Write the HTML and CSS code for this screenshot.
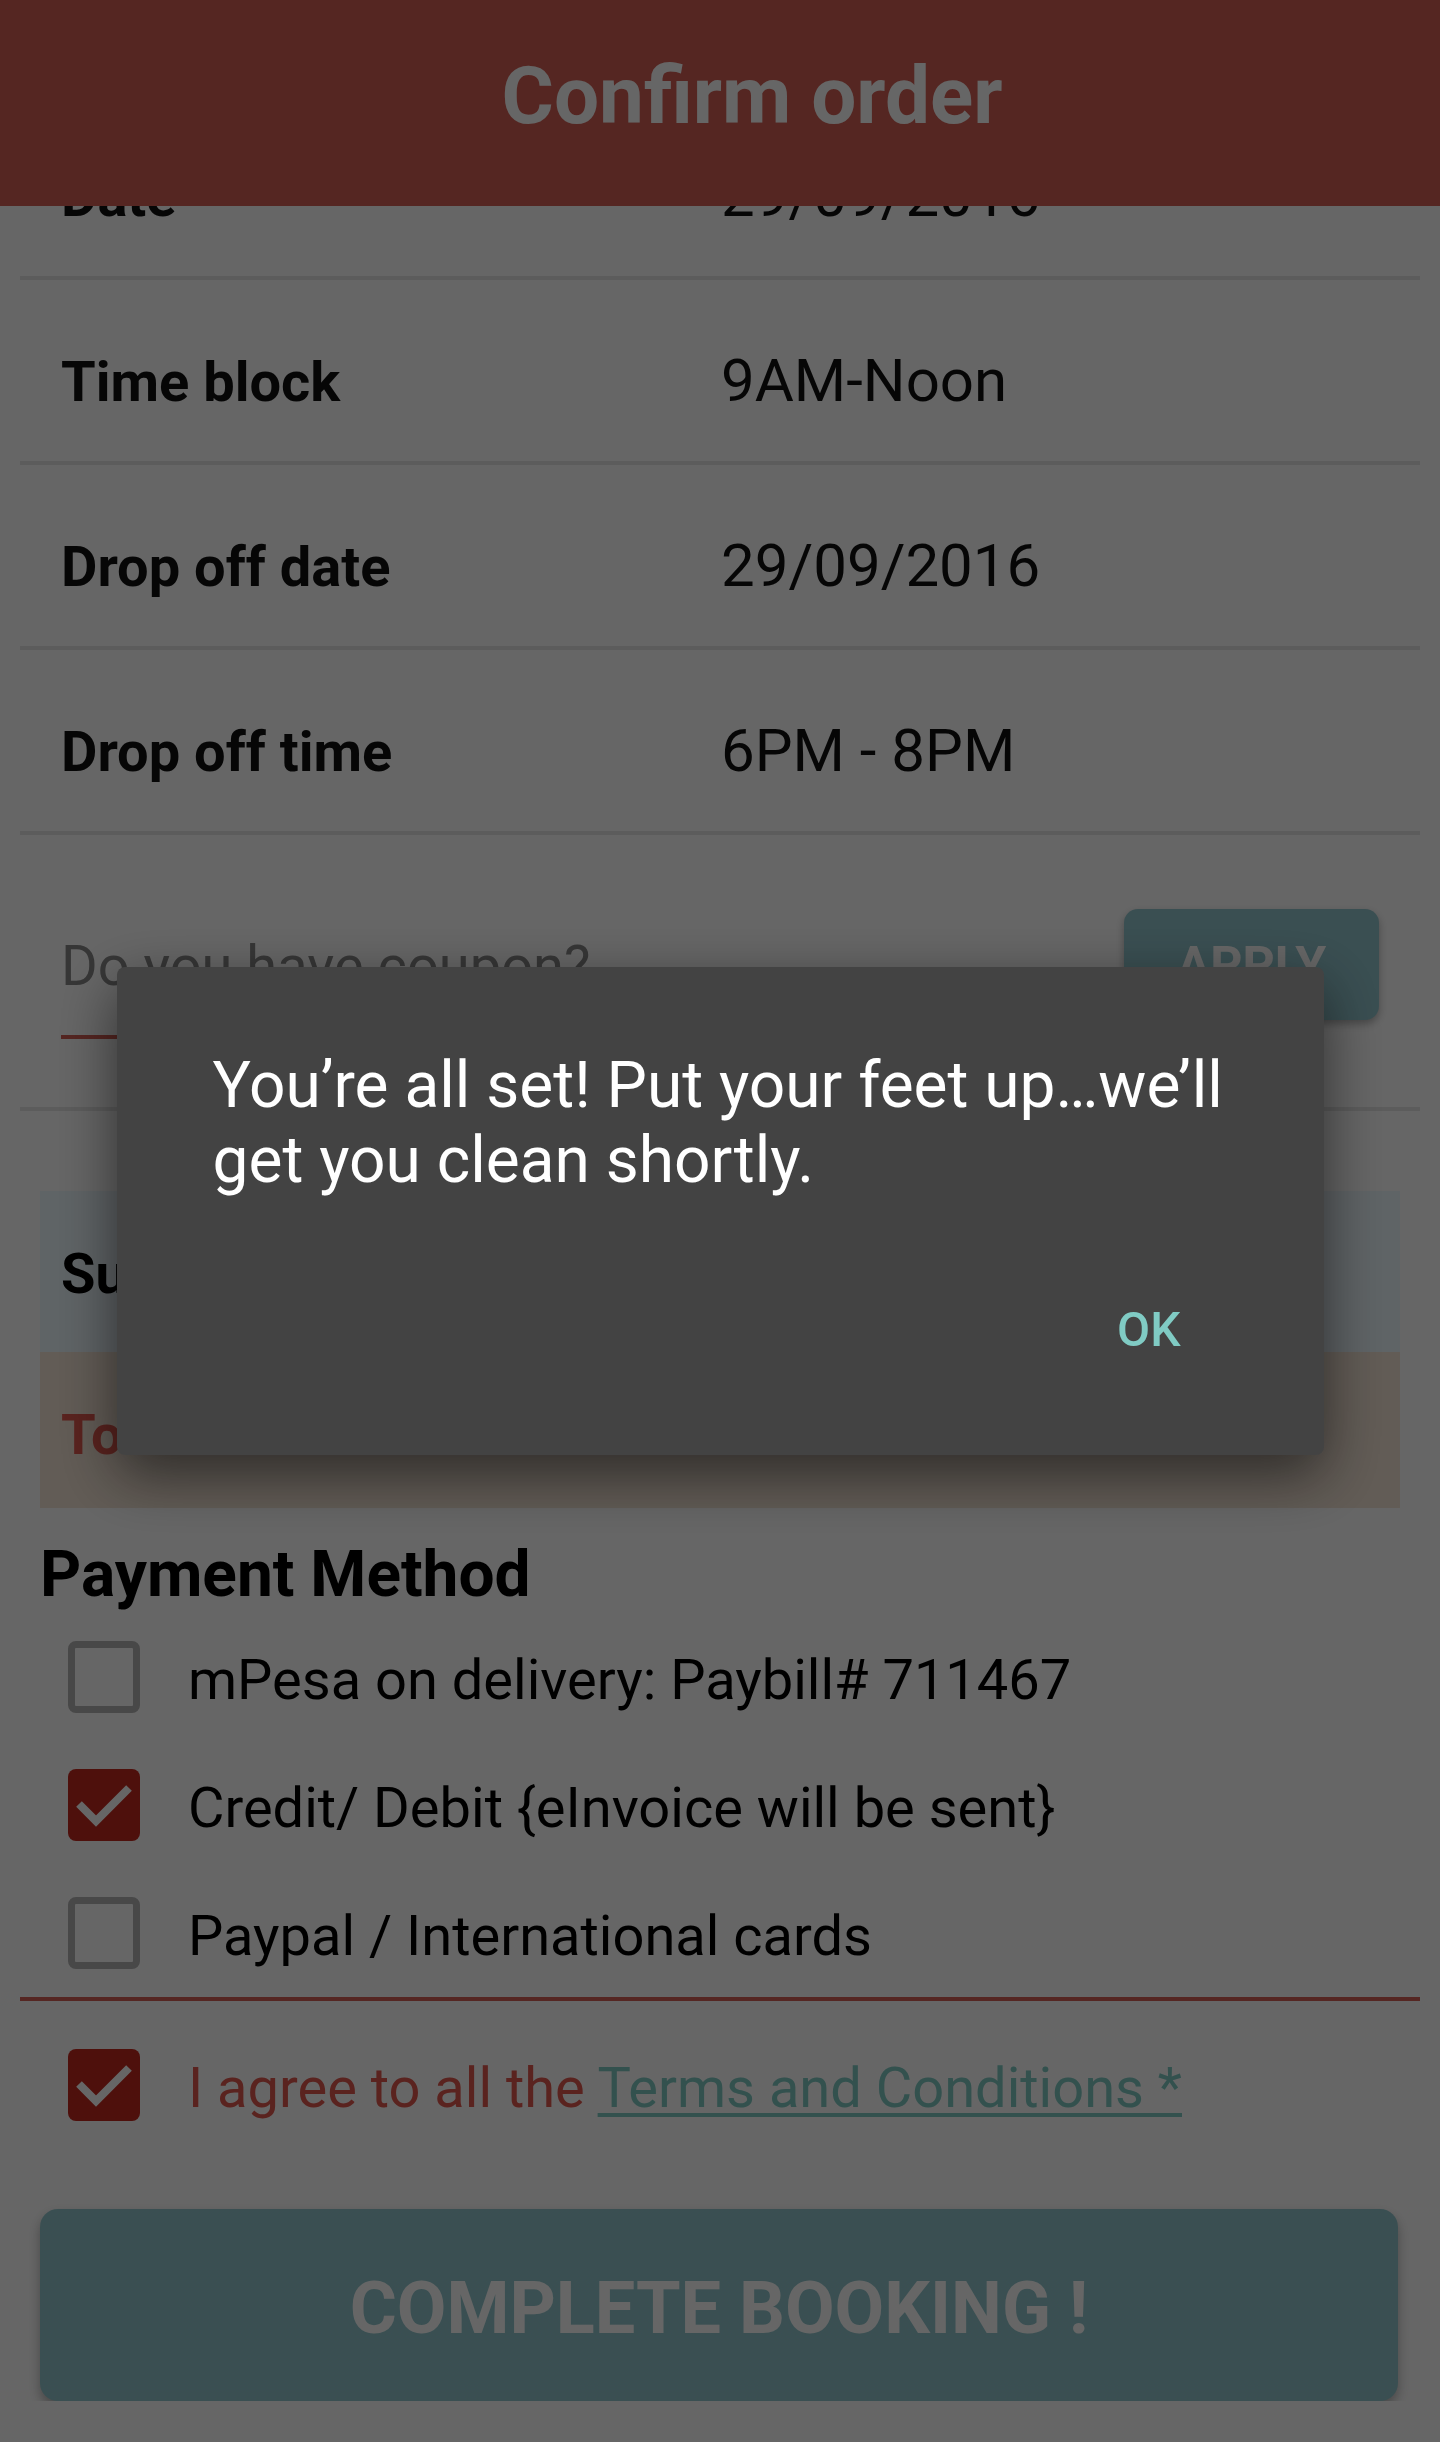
FILE: index.html
```html
<!DOCTYPE html>
<html>
<head>
    <title>Confirm order</title>
    <link rel="stylesheet" href="styles.css">
</head>
<body>
    <div class="toolbar"><h1>Confirm order</h1></div>

    <div class="content">
        <div class="details">
            <div class="row"><span class="label">Date</span><span class="value">29/09/2016</span></div>
            <div class="row"><span class="label">Time block</span><span class="value">9AM-Noon</span></div>
            <div class="row"><span class="label">Drop off date</span><span class="value">29/09/2016</span></div>
            <div class="row"><span class="label">Drop off time</span><span class="value">6PM - 8PM</span></div>
        </div>

        <div class="coupon">
            <input type="text" placeholder="Do you have coupon?">
            <button class="apply">APPLY</button>
        </div>

        <div class="summary">
            <div class="sum-row subtotal">Subtotal</div>
            <div class="sum-row total">Total</div>
        </div>

        <h2>Payment Method</h2>
        <div class="options">
            <label class="option"><span class="box"></span><span class="text">mPesa on delivery: Paybill# 711467</span></label>
            <label class="option"><span class="box checked"><svg viewBox="0 0 72 72"><path d="M11 35 L28 52 L61 19"/></svg></span><span class="text">Credit/ Debit {eInvoice will be sent}</span></label>
            <label class="option"><span class="box"></span><span class="text">Paypal / International cards</span></label>
        </div>

        <label class="option agree"><span class="box checked"><svg viewBox="0 0 72 72"><path d="M11 35 L28 52 L61 19"/></svg></span><span class="text">I agree to all the <a href="#">Terms and Conditions *</a></span></label>

        <button class="complete">COMPLETE BOOKING !</button>
    </div>

    <div class="backdrop">
        <div class="dialog">
            <p>You’re all set! Put your feet up…we’ll get you clean shortly.</p>
            <div class="actions"><button>OK</button></div>
        </div>
    </div>
</body>
</html>
```

FILE: styles.css
```css
body { margin: 0; background: #fff; font-family: Roboto, "Noto Sans", sans-serif; color: #111; }

.toolbar {
    position: fixed;
    top: 0; left: 0; right: 0;
    height: 206px;
    background: #d45f55;
    display: flex;
    align-items: center;
    justify-content: center;
    padding-left: 64px;
    z-index: 5;
}
.toolbar h1 { margin: 0 0 14px; color: #fff; font-size: 80px; font-weight: 700; }

.content { padding-top: 95px; }

.details { margin: 0 20px; }
.row {
    display: grid;
    grid-template-columns: 660px 1fr;
    align-items: baseline;
    height: 185px;
    box-sizing: border-box;
    padding: 65px 41px 0;
    border-bottom: 4px solid #e6e6e6;
}
.row .label { font-size: 56px; font-weight: 700; }
.row .value { font-size: 60px; }

.coupon {
    display: flex;
    align-items: flex-start;
    margin: 0 20px;
    padding: 74px 41px 68px;
    border-bottom: 4px solid #e6e6e6;
}
.coupon input {
    flex: 1;
    margin: 24px 34px 0 0;
    padding: 0 0 36px;
    height: 66px;
    font-family: inherit;
    font-size: 56px;
    border: none;
    border-bottom: 4px solid #d45f55;
    background: transparent;
    outline: none;
    box-sizing: content-box;
}
.coupon input::placeholder { color: #888; }
.apply {
    width: 255px;
    height: 111px;
    border: none;
    border-radius: 14px;
    background: #91c5cd;
    color: #fff;
    font-family: inherit;
    font-size: 50px;
    font-weight: 700;
    box-shadow: 0 4px 8px rgba(0,0,0,.3);
}

.summary { margin: 80px 40px 0; }
.sum-row {
    box-sizing: border-box;
    padding: 50px 21px 0;
    font-size: 56px;
    font-weight: 700;
}
.subtotal { height: 161px; background: #eef9ff; color: #000; }
.total { height: 156px; background: #f5e6d7; color: #e0584e; }

h2 { margin: 29px 40px 0; font-size: 64px; font-weight: 700; color: #000; }

.options { margin: 0 20px; border-bottom: 4px solid #d45f55; padding: 1px 0 0; }
.option {
    display: flex;
    align-items: center;
    height: 128px;
    padding-left: 48px;
    font-size: 56px;
    color: #000;
}
.option .text { padding-top: 6px; }
.box {
    width: 72px;
    height: 72px;
    box-sizing: border-box;
    border: 7px solid #b3b3b3;
    border-radius: 8px;
    margin-right: 48px;
    flex: none;
}
.box.checked { background: #c3281e; border: none; }
.box svg { width: 72px; height: 72px; display: block; }
.box path { fill: none; stroke: #fff; stroke-width: 8; }

.agree { margin: 20px 20px 0; color: #e0584e; }
.agree a { color: #80cbc4; text-decoration: underline; text-decoration-thickness: 4px; text-underline-offset: 6px; }

.complete {
    display: block;
    width: 1358px;
    height: 192px;
    margin: 60px 40px 0;
    padding-top: 8px;
    border: none;
    border-radius: 18px;
    background: #91c6cd;
    color: #fff;
    font-family: inherit;
    font-size: 72px;
    font-weight: 700;
    box-shadow: 0 6px 12px rgba(0,0,0,.3);
}

.backdrop {
    position: fixed;
    top: 0; left: 0; right: 0; bottom: 0;
    background: rgba(0,0,0,.6);
    display: flex;
    align-items: center;
    justify-content: center;
    z-index: 10;
}
.dialog {
    width: 1207px;
    margin-bottom: 20px;
    background: #434343;
    border-radius: 8px;
    box-shadow: 0 20px 60px rgba(0,0,0,.55);
    padding: 81px 0 97px;
    box-sizing: border-box;
}
.dialog p {
    margin: 0;
    padding: 0 80px 0 96px;
    font-size: 64px;
    line-height: 75px;
    color: #fff;
}
.actions { display: flex; justify-content: flex-end; margin-top: 104px; padding-right: 143px; }
.actions button {
    border: none;
    background: none;
    padding: 0;
    font-family: inherit;
    font-size: 48px;
    font-weight: 500;
    line-height: 56px;
    color: #80cbc4;
}
```
